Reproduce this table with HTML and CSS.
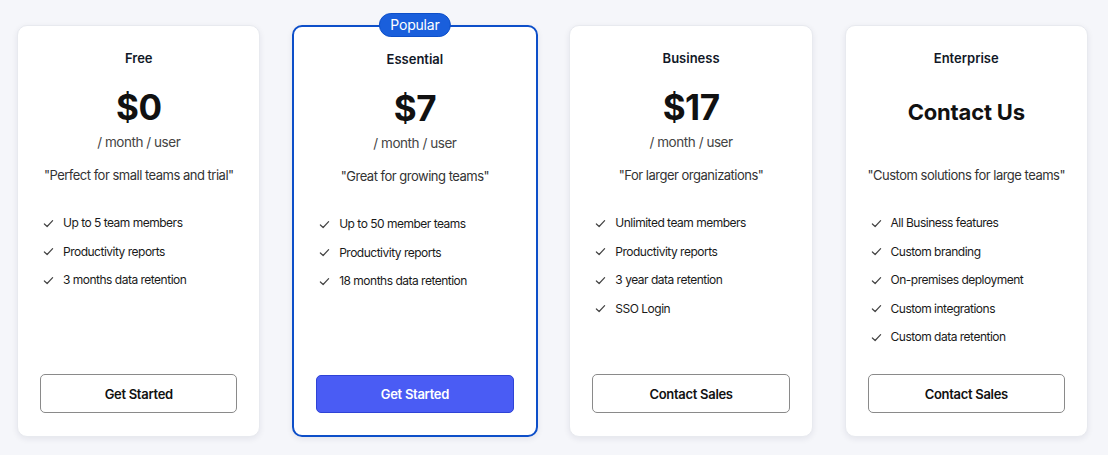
FILE: index.html
```html
<!DOCTYPE html>
<html>
<head>
<meta charset="utf-8">
<link rel="stylesheet" href="styles.css">
</head>
<body>
<div class="plans">
  <div class="card">
    <div class="name">Free</div>
    <div class="price">$0</div>
    <div class="period">/ month / user</div>
    <div class="quote">"Perfect for small teams and trial"</div>
    <ul class="features">
      <li><svg class="check" viewBox="0 0 12 12"><path d="M1.5 6.5 L4.5 9.3 L10.5 2.8"/></svg>Up to 5 team members</li>
      <li><svg class="check" viewBox="0 0 12 12"><path d="M1.5 6.5 L4.5 9.3 L10.5 2.8"/></svg>Productivity reports</li>
      <li><svg class="check" viewBox="0 0 12 12"><path d="M1.5 6.5 L4.5 9.3 L10.5 2.8"/></svg>3 months data retention</li>
    </ul>
    <button class="btn">Get Started</button>
  </div>
  <div class="card popular">
    <div class="badge">Popular</div>
    <div class="name">Essential</div>
    <div class="price">$7</div>
    <div class="period">/ month / user</div>
    <div class="quote">"Great for growing teams"</div>
    <ul class="features">
      <li><svg class="check" viewBox="0 0 12 12"><path d="M1.5 6.5 L4.5 9.3 L10.5 2.8"/></svg>Up to 50 member teams</li>
      <li><svg class="check" viewBox="0 0 12 12"><path d="M1.5 6.5 L4.5 9.3 L10.5 2.8"/></svg>Productivity reports</li>
      <li><svg class="check" viewBox="0 0 12 12"><path d="M1.5 6.5 L4.5 9.3 L10.5 2.8"/></svg>18 months data retention</li>
    </ul>
    <button class="btn primary">Get Started</button>
  </div>
  <div class="card">
    <div class="name">Business</div>
    <div class="price">$17</div>
    <div class="period">/ month / user</div>
    <div class="quote">"For larger organizations"</div>
    <ul class="features">
      <li><svg class="check" viewBox="0 0 12 12"><path d="M1.5 6.5 L4.5 9.3 L10.5 2.8"/></svg>Unlimited team members</li>
      <li><svg class="check" viewBox="0 0 12 12"><path d="M1.5 6.5 L4.5 9.3 L10.5 2.8"/></svg>Productivity reports</li>
      <li><svg class="check" viewBox="0 0 12 12"><path d="M1.5 6.5 L4.5 9.3 L10.5 2.8"/></svg>3 year data retention</li>
      <li><svg class="check" viewBox="0 0 12 12"><path d="M1.5 6.5 L4.5 9.3 L10.5 2.8"/></svg>SSO Login</li>
    </ul>
    <button class="btn">Contact Sales</button>
  </div>
  <div class="card">
    <div class="name">Enterprise</div>
    <div class="contact">Contact Us</div>
    <div class="quote">"Custom solutions for large teams"</div>
    <ul class="features">
      <li><svg class="check" viewBox="0 0 12 12"><path d="M1.5 6.5 L4.5 9.3 L10.5 2.8"/></svg>All Business features</li>
      <li><svg class="check" viewBox="0 0 12 12"><path d="M1.5 6.5 L4.5 9.3 L10.5 2.8"/></svg>Custom branding</li>
      <li><svg class="check" viewBox="0 0 12 12"><path d="M1.5 6.5 L4.5 9.3 L10.5 2.8"/></svg>On-premises deployment</li>
      <li><svg class="check" viewBox="0 0 12 12"><path d="M1.5 6.5 L4.5 9.3 L10.5 2.8"/></svg>Custom integrations</li>
      <li><svg class="check" viewBox="0 0 12 12"><path d="M1.5 6.5 L4.5 9.3 L10.5 2.8"/></svg>Custom data retention</li>
    </ul>
    <button class="btn">Contact Sales</button>
  </div>
</div>
</body>
</html>
```
FILE: styles.css
```css
* { box-sizing: border-box; }
html, body { margin: 0; padding: 0; }
body {
  background: #f5f6fa;
  font-family: Inter, "Noto Sans", sans-serif;
  color: #111;
  width: 1108px;
  height: 455px;
  overflow: hidden;
}
.plans {
  display: flex;
  gap: 31.7px;
  padding: 25px 20px 0 17px;
}
.card {
  position: relative;
  flex: 1 1 0;
  min-width: 0;
  height: 412px;
  background: #fff;
  border: 1px solid #e8eaef;
  border-radius: 10px;
  box-shadow: 0 2px 6px rgba(20, 30, 60, 0.08);
  padding: 22px 22px 23px 22px;
  display: flex;
  flex-direction: column;
  align-items: stretch;
}
.card.popular {
  border: 2px solid #0d4fc9;
  padding: 22px 22px 22px 22px;
}
.badge {
  position: absolute;
  top: -14px;
  left: 50%;
  transform: translateX(-50%);
  background: #1a5fdc;
  color: #fff;
  font-size: 14px;
  line-height: 22px;
  padding: 0 10.5px;
  border-radius: 12px;
  border: 1px solid #0d4fc9;
  white-space: nowrap;
  letter-spacing: -0.2px;
}
.name {
  text-align: center;
  font-size: 13px;
  font-weight: 600;
  line-height: 20px;
  color: #111827;
}
.price {
  text-align: center;
  font-size: 35px;
  font-weight: 700;
  line-height: 44px;
  margin-top: 17px;
  letter-spacing: -0.5px;
}
.period {
  text-align: center;
  font-size: 13.5px;
  line-height: 20px;
  color: #444;
  margin-top: 3px;
  letter-spacing: -0.45px;
}
.contact {
  text-align: center;
  font-size: 22px;
  font-weight: 700;
  line-height: 54px;
  height: 67px;
  margin-top: 17px;
  letter-spacing: -0.2px;
}
.quote {
  text-align: center;
  font-size: 13px;
  line-height: 20px;
  color: #333;
  margin-top: 13px;
  letter-spacing: -0.5px;
  white-space: nowrap;
}
.features {
  list-style: none;
  margin: 28px 0 0 0;
  padding: 0 0 0 3px;
  display: flex;
  flex-direction: column;
  gap: 8.5px;
}
.features li {
  display: flex;
  align-items: center;
  gap: 9px;
  font-size: 12px;
  line-height: 20px;
  color: #1a1a1a;
  letter-spacing: -0.5px;
}
.check {
  width: 11px;
  height: 11px;
  flex: none;
}
.check path {
  fill: none;
  stroke: #444;
  stroke-width: 1.3;
  stroke-linecap: round;
  stroke-linejoin: round;
}
.btn {
  margin-top: auto;
  height: 39px;
  width: 100%;
  background: #fff;
  border: 1px solid #8a8a8a;
  border-radius: 5px;
  font-family: Inter, "Noto Sans", sans-serif;
  font-size: 13px;
  font-weight: 600;
  color: #111;
  letter-spacing: -0.3px;
}
.btn.primary {
  background: #4a5cf4;
  border-color: #2e43d6;
  color: #fff;
  height: 38px;
}
```
